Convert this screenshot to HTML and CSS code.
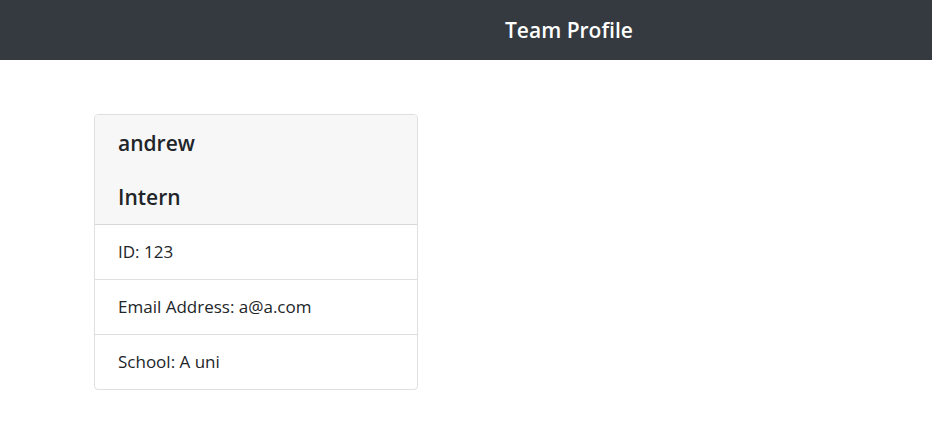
FILE: index.html
```html
<!DOCTYPE html>
<html lang="en">
<head>
<meta charset="utf-8">
<meta name="viewport" content="width=device-width, initial-scale=1">
<title>Team Profile</title>
<link rel="stylesheet" href="styles.css">
</head>
<body>
<header class="navbar">
  <h1 class="navbar-title">Team Profile</h1>
</header>
<main class="team">
  <article class="card">
    <header class="card-header">
      <h2 class="card-title">andrew</h2>
      <h3 class="card-title">Intern</h3>
    </header>
    <ul class="card-list">
      <li class="card-item">ID: 123</li>
      <li class="card-item">Email Address: a@a.com</li>
      <li class="card-item">School: A uni</li>
    </ul>
  </article>
</main>
</body>
</html>
```

FILE: styles.css
```css
* {
  box-sizing: border-box;
}

body {
  margin: 0;
  background: #fff;
  color: #212529;
  font-family: "Segoe UI", "Open Sans", "Noto Sans", sans-serif;
  font-size: 17px;
  line-height: 26px;
}

.navbar {
  padding: 16px 24px 16px 505px;
  background: #343a40;
}

.navbar-title {
  margin: 0;
  color: #fff;
  font-size: 21px;
  font-weight: 600;
  line-height: 28px;
}

.team {
  padding: 54px 94px;
}

.card {
  width: 100%;
  max-width: 324px;
  border: 1px solid #dfdfdf;
  border-radius: 4px;
  overflow: hidden;
}

.card-header {
  display: grid;
  gap: 26px;
  padding: 14px 23px 13px;
  background: #f7f7f7;
  border-bottom: 1px solid #d8d8d8;
}

.card-title {
  margin: 0;
  font-size: 21px;
  font-weight: 600;
  line-height: 28px;
}

.card-list {
  margin: 0;
  padding: 0;
  list-style: none;
}

.card-item {
  padding: 14px 23px;
}

.card-item + .card-item {
  border-top: 1px solid #dfdfdf;
}
```
